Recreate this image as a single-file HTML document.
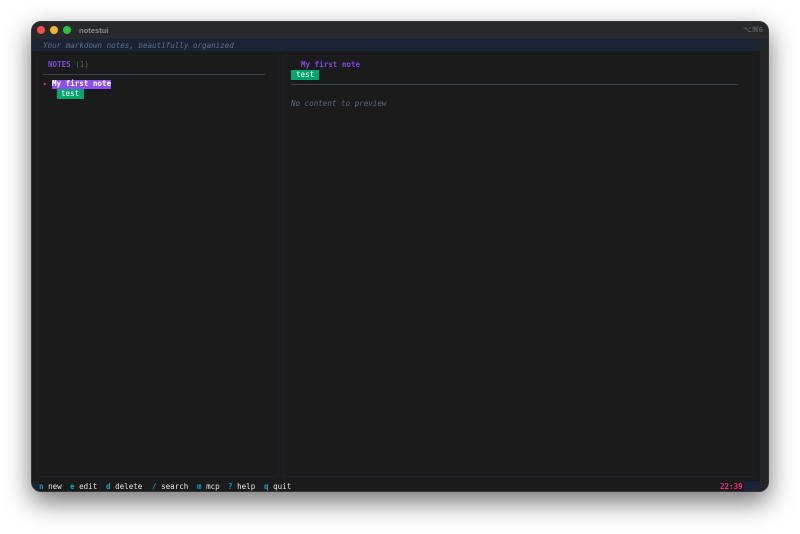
<!DOCTYPE html>
<html><head><meta charset="utf-8">
<style>
html,body{margin:0;padding:0;width:800px;height:534px;overflow:hidden;background:#fff}
*{box-sizing:border-box}
#win{position:absolute;left:31px;top:21px;width:738px;height:471px;border-radius:10px;background:#1b1b1b;overflow:hidden;border:1px solid #33343a}
#shadow{position:absolute;left:31px;top:21px;width:738px;height:471px;border-radius:10px;box-shadow:0 10px 26px rgba(0,0,0,.55)}
#in{position:absolute;left:-1px;top:-1px;width:738px;height:471px;filter:blur(.25px)}
.a{position:absolute}
.t{position:absolute;font-family:"DejaVu Sans Mono","Liberation Mono",monospace;font-size:7.55px;line-height:10px;white-space:pre;color:#e6e6e6}
.k{color:#0aa5c4;font-weight:bold}
</style></head><body>
<div id="shadow"></div>
<div id="win"><div id="in">
 <div class="a" style="left:0;top:0;width:738px;height:18px;background:#28292b"></div>
 <div class="a" style="left:6px;top:5px;width:8px;height:8px;border-radius:50%;background:#f4504c"></div>
 <div class="a" style="left:19px;top:5px;width:8px;height:8px;border-radius:50%;background:#f5b52e"></div>
 <div class="a" style="left:32px;top:5px;width:8px;height:8px;border-radius:50%;background:#2bc244"></div>
 <div class="a" style="left:48px;top:5px;font:bold 7.6px/10px 'Liberation Sans',sans-serif;color:#8b8c8f">notestui</div>
 <div class="a" style="left:712px;top:4px;font:bold 7.6px/10px 'Liberation Sans','DejaVu Sans',sans-serif;color:#5d5e61">⌥⌘6</div>

 <div class="a" style="left:0;top:18px;width:729px;height:12px;background:#1a2435"></div>
 <div class="a" style="left:729px;top:18px;width:9px;height:453px;background:#242527"></div>
 <div class="a" style="left:713px;top:460px;width:16px;height:11px;background:#1a2435"></div>
 <div class="a" style="left:0;top:460px;width:8px;height:11px;background:#1a2435"></div>

 <div class="a" style="left:6px;top:34px;width:242px;height:422px;border:1px solid #1d222a;border-radius:2px"></div>
 <div class="a" style="left:252px;top:34px;width:471px;height:422px;border:1px solid #1d222a;border-radius:2px"></div>

 <div class="t" style="left:12px;top:20px;font-style:italic;color:#5f6f86">Your markdown notes, beautifully organized</div>

 <div class="t" style="left:17px;top:39px;font-weight:bold;color:#7c4fe0">NOTES<span style="font-weight:normal;color:#5c6470"> (1)</span></div>
 <div class="a" style="left:12px;top:53px;width:222px;height:1px;background:#394350"></div>
 <div class="t" style="left:12px;top:58px;color:#e0287e">▸</div>
 <div class="a" style="left:21px;top:59px;width:59px;height:9px;background:#8b4ff0"></div>
 <div class="t" style="left:21px;top:58px;font-weight:bold;color:#fff">My first note</div>
 <div class="a" style="left:26px;top:68px;width:27px;height:10px;background:#05a56c"></div>
 <div class="t" style="left:30px;top:68px;color:#fff">test</div>

 <div class="t" style="left:270px;top:39px;font-weight:bold;color:#8148ee">My first note</div>
 <div class="a" style="left:260px;top:49px;width:28px;height:10px;background:#05a56c"></div>
 <div class="t" style="left:265px;top:49px;color:#fff">test</div>
 <div class="a" style="left:260px;top:63px;width:447px;height:1px;background:#394350"></div>
 <div class="t" style="left:260px;top:78px;font-style:italic;color:#5f6b7c">No content to preview</div>

 <div class="t" style="left:8px;top:461px"><span class="k">n</span> new</div>
 <div class="t" style="left:39px;top:461px"><span class="k">e</span> edit</div>
 <div class="t" style="left:75px;top:461px"><span class="k">d</span> delete</div>
 <div class="t" style="left:121px;top:461px"><span class="k">/</span> search</div>
 <div class="t" style="left:166px;top:461px"><span class="k">m</span> mcp</div>
 <div class="t" style="left:197px;top:461px"><span class="k">?</span> help</div>
 <div class="t" style="left:233px;top:461px"><span class="k">q</span> quit</div>
 <div class="t" style="left:689px;top:461px;font-weight:bold;color:#f0288a">22:39</div>
</div></div>
</body></html>
